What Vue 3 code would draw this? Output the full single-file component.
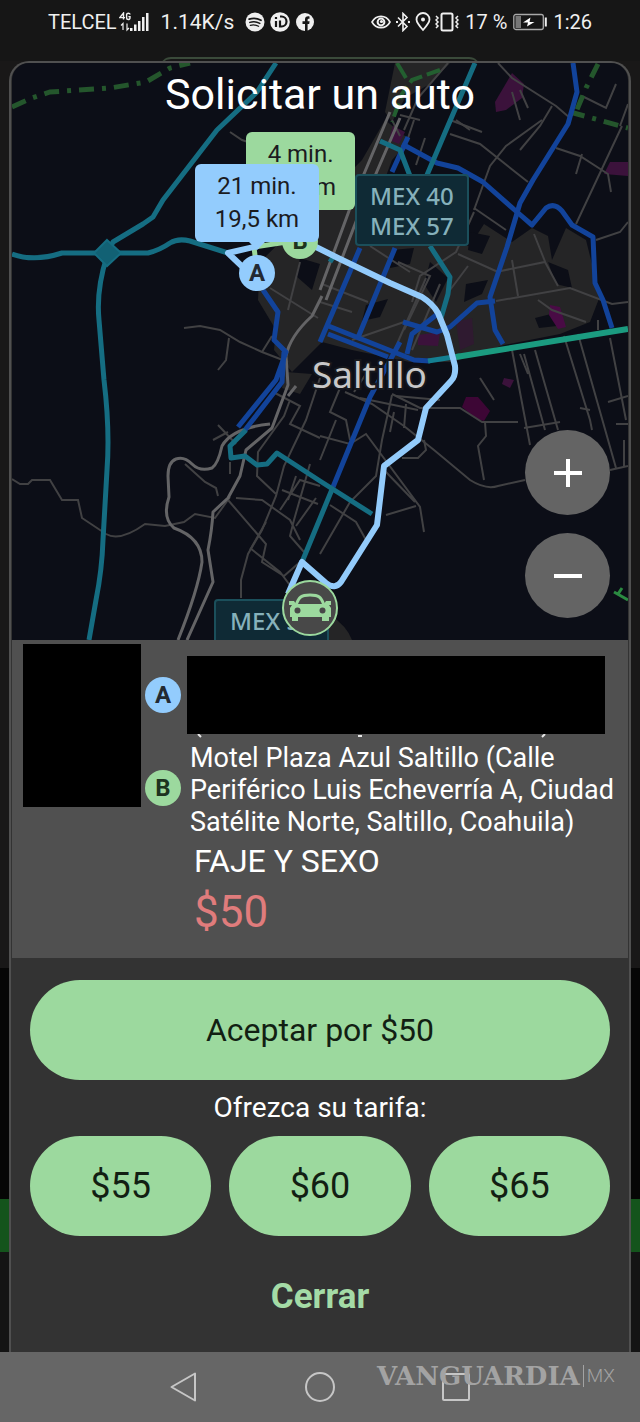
<template>
  <div class="screen">
    <!-- Status bar -->
    <header class="status-bar">
      <div class="status-group">
        <span class="carrier">TELCEL</span>
        <svg class="signal" viewBox="0 0 30 20" width="30" height="20" aria-hidden="true">
          <g fill="none" stroke="#f0f0f0" stroke-width="1.4">
            <path d="M4.5 7.5V1L0.8 5.6H6" />
            <path d="M11 2.6C11 0.8 7.6 0.8 7.6 2.6V6C7.6 8 11 8 11 6V4.6H9.4" />
            <path d="M4 18V11.500L2 13.500M8 11.500V18L10 16" stroke-width="1.2" />
          </g>
          <path fill="#f0f0f0" d="M11 16h2.500v3H11zM15 12.500h2.500V19H15zM19 9h2.500v10H19zM23 5h2.500v14H23zM27 1h2.500v18H27z" />
        </svg>
        <span class="speed">1.14K/s</span>
        <span class="app-icons">
          <svg viewBox="0 0 20 20" width="20" height="20" aria-hidden="true">
            <circle cx="10" cy="10" r="9.500" fill="#efefef" />
            <g fill="none" stroke="#161616" stroke-linecap="round">
              <path d="M4.200 7.200C8 6 12.500 6.400 16 8.200" stroke-width="1.800" />
              <path d="M4.800 10.400C8 9.400 11.800 9.800 14.800 11.400" stroke-width="1.500" />
              <path d="M5.300 13.400C8 12.600 11.200 13 13.600 14.300" stroke-width="1.200" />
            </g>
          </svg>
          <svg viewBox="0 0 20 20" width="20" height="20" aria-hidden="true">
            <circle cx="10" cy="10" r="9.800" fill="#efefef" />
            <path d="M6 9v6M6 5v2M10 4.500h1.500a5 5 0 0 1 0 10H10V8.500" fill="none" stroke="#161616" stroke-width="2.200" />
          </svg>
          <svg viewBox="0 0 20 20" width="20" height="20" aria-hidden="true">
            <circle cx="10" cy="10" r="9" fill="#efefef" />
            <path d="M10 19v-7H7.500V9.300H10V7.500C10 5 11.500 4 14.500 4.400v2.300C13 6.600 12.600 7 12.600 8v1.300h2L14.200 12h-1.600v7z" fill="#161616" />
          </svg>
        </span>
      </div>

      <div class="status-group">
        <span class="sys-icons">
          <svg viewBox="0 0 20 20" width="20" height="20" aria-hidden="true">
            <path d="M1 10C5 2.500 15 2.500 19 10C15 17.500 5 17.500 1 10z" fill="none" stroke="#f0f0f0" stroke-width="1.600" />
            <circle cx="10" cy="10" r="3.400" fill="none" stroke="#f0f0f0" stroke-width="2" />
            <circle cx="10.500" cy="9.500" r="1.600" fill="#f0f0f0" />
          </svg>
          <svg viewBox="0 0 16 20" width="16" height="20" aria-hidden="true">
            <path d="M3 5.500L12 14.500L8 18.500V1.500L12 5.500L3 14.500" fill="none" stroke="#f0f0f0" stroke-width="1.600" />
            <path d="M1 9h2v2H1zM13 9h2v2h-2z" fill="#f0f0f0" />
          </svg>
          <svg viewBox="0 0 16 20" width="16" height="20" aria-hidden="true">
            <path d="M8 18C4 13.500 1.500 10.500 1.500 7.500A6.500 6.500 0 0 1 14.500 7.500C14.500 10.500 12 13.500 8 18z" fill="none" stroke="#f0f0f0" stroke-width="1.800" />
            <circle cx="8" cy="7.600" r="2" fill="#f0f0f0" />
          </svg>
          <svg viewBox="0 0 24 20" width="24" height="20" aria-hidden="true">
            <rect x="6.500" y="1.500" width="11" height="17" rx="1.500" fill="none" stroke="#f0f0f0" stroke-width="2" />
            <path d="M1 4l2 2-2 2 2 2-2 2 2 2-2 2M23 4l-2 2 2 2-2 2 2 2-2 2 2 2" fill="none" stroke="#f0f0f0" stroke-width="1.500" />
          </svg>
        </span>
        <span>17 %</span>
        <svg viewBox="0 0 34 18" width="34" height="18" aria-hidden="true">
          <rect x="0.800" y="1.500" width="29.500" height="15" rx="2" fill="none" stroke="#a9a9a9" stroke-width="1.300" />
          <rect x="2.500" y="3" width="5.500" height="12" fill="#777" />
          <path d="M31.800 4.500h2v9h-2z" fill="#f0f0f0" />
          <path d="M17.500 4.500L10 9.500h5l-1 4L21.500 9h-5z" fill="#fff" />
        </svg>
        <span class="clock">1:26</span>
      </div>
    </header>

    <div class="stage">
      <div class="peek"></div>

      <main class="dialog">
        <!-- Map -->
        <section class="map">
          <svg class="map-canvas" viewBox="12 63 616 577" preserveAspectRatio="xMidYMid slice" aria-hidden="true">
            <rect x="12" y="63" width="616" height="577" fill="#0c0e17" />

            <!-- urban areas -->
            <g fill="#252526">
              <path d="M385 120L362 160L350 172L318 205L260 262L258 300L276 330L274 350L292 372L322 342L352 350L410 362L452 362L504 345L560 334L590 322L600 296L586 240L566 228L552 260L548 236L532 228L512 242L484 224L470 246L430 246L360 246L392 160L410 140z" />
              <path d="M395 63L450 63L430 84L405 98L392 122L385 112z" />
              <path d="M286 372L312 374L300 394L282 388z" />
              <path d="M325 640L329 614Q347 626 352 640z" />
            </g>
            <g fill="#0c0e17">
              <path d="M430 262l18 16-12 24-12-18zM392 250l22-2-4 16-20 4zM466 284l22-4-6 14-18 8zM300 258l20 6-8 26-16-14zM548 262l20 8 4 18-16-4zM366 305l22-6-8 18-18 4zM470 232l20 4-8 18-14-4zM535 318l16-4 6 12-18 2z" />
            </g>

            <!-- landmarks -->
            <g fill="#3b123b">
              <path d="M512 73L524 84L522 98L506 110L496 112L495 102z" />
              <path d="M550 305l10 2 6 20-8 2-9-14z" fill="#490b45" />
              <path d="M393 126l12 6-6 12-10-4z" />
              <path d="M418 335l22-3-2 14-20-1z" />
              <path d="M610 162h18v14l-24-2z" />
              <path d="M466 397l12 0 12 14-6 10-8-2-14-12z" fill="#3d0635" />
              <path d="M456 322l16-4 2 26-14 6z" fill="#2f1a30" />
              <path d="M504 378l10 2-4 8-8-4z" />
            </g>

            <!-- minor streets -->
            <g class="streets">
              <path d="M12 479L20 484L28 484L32 480L50 480L62 500L78 500L82 518L106 534Q120 542 145 524L165 526L184 522L195 514L215 518L230 497" />
              <path d="M184 328L200 326L220 330L240 342L262 352L288 362M229 338L226 360L218 370M262 352L272 336" />
              <path d="M185 464L205 482L216 488L218 496M213 440L228 432M218 425L236 444M230 462v12" />
              <path d="M320 378L306 420L284 466L276 496L262 530L248 554L241 580V598" />
              <path d="M228 500L266 544L262 562L284 576L300 562M250 548L280 572L292 588M266 522L250 550" />
              <path d="M275 393L300 406L290 424L320 438M290 400L284 416L258 452L257 476L276 494" />
              <path d="M236 498L262 500L290 520L300 540M310 464L294 520L290 536L304 552M280 510L300 480L320 486M282 490L318 504M296 476L288 500M316 498L296 526" />
              <path d="M392 394L420 408H460L482 422H518M485 422L486 436L478 446L484 480" />
              <path d="M345 392L372 404L404 426L434 450L470 480Q486 490 498 486L525 480M610 470L628 466" />
              <path d="M340 388L330 412L346 420L350 440M320 436L350 444L366 434L420 507L424 532M386 515L416 506M384 470L415 502" />
              <path d="M392 395L382 440L376 476L350 502L320 554M330 505L356 522L366 540M320 460L336 420" />
              <path d="M360 398L418 410M394 412L390 432M424 440L426 450L418 458H402" />
              <path d="M512 350L530 445M524 354L545 430M535 350L558 430M564 336L590 420L592 430M578 334L616 468M610 338L626 420M520 354L528 374" />
              <path d="M524 428L560 422M580 408L590 410M608 402L628 396M616 424H628M624 440V466" />
              <path d="M425 138L416 165M414 120L404 150" />
              <path d="M450 134L480 144L528 182M542 120L506 146L490 166L474 210M450 120L482 132" />
              <path d="M556 148L580 156L608 174L611 192M622 126L576 224M582 154L576 174" />
              <path d="M498 63L512 78L556 106L570 118M520 90L528 108M552 106L540 126L520 150M512 92L520 120" />
              <path d="M582 96L606 108L616 84M628 104L620 126M596 240L620 232L628 222" />
              <path d="M474 208L506 230M458 254L498 272M496 272L545 262L558 286M512 260L518 296M534 234L546 264" />
              <path d="M496 301L570 288L612 304L628 302M538 300L552 310L586 322M598 320V330" />
              <path d="M474 212L456 252L420 276L412 302M450 290L468 266M398 262L430 276L404 330M370 246L410 272" />
              <path d="M322 284L368 302M320 302L352 312M352 340L404 322M426 278L390 360M440 284L412 350" />
              <path d="M400 136L392 120M448 63L418 98L404 130M400 115L420 120M456 120L470 130" />
              <path d="M296 158L242 140L230 132M270 288L318 318M300 262L288 310" />
              <path d="M370 368L354 392M396 396L440 400M406 404L404 428M480 378L494 400" />
            </g>

            <!-- rail and secondary roads -->
            <g class="roads">
              <path d="M390 112L353 200L320 290M400 118L362 206L326 300" stroke-width="2" />
              <path d="M322 296L312 316Q290 336 286 356L288 385L272 428L246 450L240 476L228 498L213 512Q212 530 208 550L213 582L187 640" />
              <path d="M270 424Q232 428 222 446Q218 464 212 468Q200 472 192 464Q184 456 176 459Q168 462 168 476L169 497Q162 518 174 528Q202 538 202 562Q198 590 178 640" />
              <path d="M296 386L288 396" />
            </g>

            <!-- district boundary -->
            <g class="boundary">
              <path d="M12 107L32 98L50 92L110 88L146 82L170 68L190 63" />
              <path d="M570 112L628 128M598 64L586 88L576 112" />
            </g>
            <g fill="none" stroke="#235f30" stroke-width="4">
              <path d="M440 70L412 80L402 94L392 122" stroke-dasharray="14 5" />
              <path d="M397 63L406 78" />
              <path d="M614 592L628 600M622 588L618 594" stroke="#2b8a41" stroke-width="3" />
            </g>

            <!-- avenues -->
            <g class="avenues">
              <path d="M573 63L577 92L568 124L533 180L520 203L507 247L490 297L495 330L503 344" />
              <path d="M402 144L437 163L458 168L483 182L517 212L532 225L546 208Q554 202 562 211L572 225L593 237L595 283L603 300L612 328" />
              <path d="M495 301L477 303L450 327L437 332L403 322M440 312L412 334L407 354" />
              <path d="M408 137L392 172M360 248L320 342M395 248L357 340M326 325L414 360L430 361M328 334L388 357M400 342L370 397L333 487" />
              <path d="M263 290L278 312L274 340L286 352L276 380L238 427M284 352L282 382L245 430" />
            </g>

            <!-- highways -->
            <g class="highways">
              <path d="M276 63L257 92L217 130L163 200L153 217L143 224L113 242L107 253" />
              <path d="M12 254Q34 262 62 253H148Q160 250 170 243Q178 238 190 241L228 253" stroke-width="6" />
              <path d="M107 256Q96 290 99 320L104 380Q110 430 107 470L103 540Q102 570 96 600L89 640" />
              <path d="M475 63L447 128L427 175M380 141L400 150L410 176M430 246L450 277L448 294L441 318" />
              <path d="M246 430L230 446L231 458L245 456L257 465L267 464L277 453L320 481L372 514M333 487L302 562" />
              <path d="M335 254L330 262" />
            </g>
            <path d="M107 240L121 253L107 266L94 253z" fill="#126174" stroke="#156d82" stroke-width="2" />
            <path d="M428 361L460 356" fill="none" stroke="#147f91" stroke-width="5" />
            <path d="M456 357L628 329" fill="none" stroke="#1b9b80" stroke-width="6" />

            <!-- road signs and city name -->
            <g class="sign">
              <rect x="356" y="175" width="112" height="70" rx="3" />
              <text x="370" y="205">MEX 40</text>
              <text x="370" y="235">MEX 57</text>
              <rect x="215" y="600" width="113" height="60" rx="3" />
              <text x="230" y="630">MEX 57</text>
            </g>
            <text class="city" x="312" y="388">Saltillo</text>

            <!-- route -->
            <path d="M257 272L254 247L300 240" fill="none" stroke="#9cd99e" stroke-width="5" />
            <path class="route" d="M250 274L228 253L258 246M300 243L316 247L338 258L390 283L422 297Q433 304 438 313L447 335L455 366Q456 376 451 381L426 408L418 440L384 466L377 525L341 582Q335 590 326 583L302 562L288 594" />
          </svg>

          <h1 class="title">Solicitar un auto</h1>

          <span class="pin badge-b">B</span>
          <div class="bubble bubble-b">4 min.<br>1,8 km</div>
          <div class="bubble bubble-a">21 min.<br>19,5 km</div>
          <span class="pin badge-a">A</span>

          <div class="car-pin">
            <svg viewBox="0 0 44 32" width="44" height="32" aria-hidden="true">
              <path d="M8 13C11 5 13 3 22 3S33 5 36 13" fill="none" stroke="#9cd99e" stroke-width="3" />
              <path d="M1 9h5l2 3h28l2-3h5v4h-2l2 3v9h-2v4h-7v-4H10v4H4v-4H2v-9l2-3H1z" fill="#9cd99e" />
              <circle cx="9.500" cy="18.500" r="3" fill="#484848" />
              <circle cx="34.500" cy="18.500" r="3" fill="#484848" />
            </svg>
          </div>

          <div class="zoom">
            <button type="button" aria-label="Acercar" @click="zoomIn">
              <svg viewBox="0 0 30 30" width="30" height="30"><path d="M15 1v28M1 15h28" stroke="#fff" stroke-width="4" /></svg>
            </button>
            <button type="button" aria-label="Alejar" @click="zoomOut">
              <svg viewBox="0 0 30 30" width="30" height="30"><path d="M1 15h28" stroke="#fff" stroke-width="4" /></svg>
            </button>
          </div>
        </section>

        <!-- Trip details -->
        <section class="trip">
          <div class="photo"></div>
          <div class="trip-info">
            <div class="stop">
              <span class="badge badge-a">A</span>
              <div class="hidden-address">
                <svg viewBox="0 0 417 4" width="417" height="4" aria-hidden="true">
                  <path d="M11 0l3 3M171 2h4M355 3l3-3" stroke="#e8e8e8" stroke-width="2" />
                </svg>
              </div>
            </div>
            <div class="stop">
              <span class="badge badge-b">B</span>
              <p class="address">{{ destination }}</p>
            </div>
            <p class="comment">FAJE Y SEXO</p>
            <p class="price">${{ price }}</p>
          </div>
        </section>

        <!-- Actions -->
        <section class="actions">
          <button type="button" class="pill accept" @click="offer(price)">Aceptar por ${{ price }}</button>
          <p class="offer-label">Ofrezca su tarifa:</p>
          <div class="fares">
            <button
              v-for="fare in fares"
              :key="fare"
              type="button"
              class="pill"
              @click="offer(fare)"
            >
              ${{ fare }}
            </button>
          </div>
          <button type="button" class="close">Cerrar</button>
        </section>
      </main>
    </div>

    <!-- Android navigation -->
    <nav class="nav-bar">
      <button type="button" aria-label="Atrás">
        <svg viewBox="0 0 32 32" width="32" height="32"><path d="M27 2.500V29.500L3.500 16z" /></svg>
      </button>
      <button type="button" aria-label="Inicio">
        <svg viewBox="0 0 32 32" width="32" height="32"><circle cx="16" cy="16" r="14" /></svg>
      </button>
      <button type="button" aria-label="Recientes">
        <svg viewBox="0 0 32 32" width="32" height="32"><rect x="3" y="3" width="26" height="26" rx="1" /></svg>
      </button>
      <div class="watermark"><b>VANGUARDIA</b><span>MX</span></div>
    </nav>
  </div>
</template>

<script setup>
import { ref } from 'vue'

const destination = 'Motel Plaza Azul Saltillo (Calle Periférico Luis Echeverría A, Ciudad Satélite Norte, Saltillo, Coahuila)'
const price = ref(50)
const fares = [55, 60, 65]

const zoomLevel = ref(12)
const offered = ref(null)

function zoomIn() {
  zoomLevel.value++
}

function zoomOut() {
  zoomLevel.value--
}

function offer(amount) {
  offered.value = amount
}
</script>

<style>
body {
  background: #161616;
}
</style>

<style scoped>
.screen {
  min-height: 100vh;
  display: flex;
  flex-direction: column;
  background: #161616;
  color: #fff;
  font-family: Roboto, "Liberation Sans", sans-serif;
}

button {
  border: none;
  padding: 0;
  font-family: inherit;
  cursor: pointer;
}

h1,
p {
  margin: 0;
  font-weight: 400;
}

/* Status bar */
.status-bar {
  height: 61px;
  box-sizing: border-box;
  padding: 0 48px 17px;
  display: flex;
  justify-content: space-between;
  align-items: center;
  font-size: 20px;
  color: #f0f0f0;
}

.status-group {
  display: flex;
  align-items: center;
  gap: 6px;
}

.signal {
  margin: 0 6px 0 -4px;
}

.speed {
  font-size: 21px;
}

.app-icons {
  display: flex;
  gap: 5px;
  margin-left: 5px;
}

.sys-icons {
  display: flex;
  gap: 4px;
}

/* Dialog over the order feed */
.stage {
  flex: 1;
  position: relative;
  display: flex;
  padding: 0 9px;
  background: linear-gradient(
    #191818 907px,
    #060606 907px 1138px,
    #14541c 1138px 1191px,
    #141414 1191px
  );
}

.peek {
  position: absolute;
  top: -4px;
  left: 25%;
  right: 25%;
  height: 20px;
  border-top: 2px solid #3a4a3a;
  border-radius: 18px;
}

.dialog {
  flex: 1;
  min-width: 0;
  display: flex;
  flex-direction: column;
  position: relative;
  padding: 0 1px;
  border: 2px solid #505050;
  border-bottom: none;
  border-radius: 20px 20px 0 0;
  background: #333;
}

/* Map */
.map {
  position: relative;
  aspect-ratio: 616 / 577;
  overflow: hidden;
  border-radius: 17px 17px 0 0;
}

.map-canvas {
  position: absolute;
  inset: 0;
  width: 100%;
  height: 100%;
}

.streets path {
  fill: none;
  stroke: #414143;
  stroke-width: 2;
}

.roads path {
  fill: none;
  stroke: #646466;
  stroke-width: 3;
  stroke-linejoin: round;
}

.boundary path {
  fill: none;
  stroke: #24562c;
  stroke-width: 5;
  stroke-dasharray: 15 8 4 8;
}

.avenues path {
  fill: none;
  stroke: #12439a;
  stroke-width: 5;
  stroke-linejoin: round;
}

.highways path {
  fill: none;
  stroke: #156d82;
  stroke-width: 5;
  stroke-linejoin: round;
}

.sign rect {
  fill: #0f2a35;
  stroke: #1b4f5b;
  stroke-width: 2;
}

.sign text {
  fill: #86b1bb;
  font-family: "Noto Sans", sans-serif;
  font-size: 24px;
  font-weight: 500;
}

.city {
  fill: #c8c8c8;
  stroke: #17181c;
  stroke-width: 4;
  paint-order: stroke;
  font-family: "Noto Sans", sans-serif;
  font-size: 37px;
}

.route {
  fill: none;
  stroke: #93cbfb;
  stroke-width: 6;
  stroke-linejoin: round;
}

.title {
  position: relative;
  text-align: center;
  font-size: 43px;
  line-height: 62px;
}

.badge,
.pin {
  width: 36px;
  height: 36px;
  flex-shrink: 0;
  border-radius: 50%;
  color: #222a33;
  font-size: 24px;
  font-weight: 700;
  line-height: 36px;
  text-align: center;
}

.badge-a {
  background: #93ccfd;
}

.badge-b {
  background: #9cd99e;
  color: #1d331f;
}

.pin {
  position: absolute;
  transform: translate(-50%, -50%);
}

.pin.badge-a {
  left: 39.8%;
  top: 36.4%;
}

.pin.badge-b {
  left: 46.8%;
  top: 30.8%;
}

.bubble {
  position: absolute;
  box-sizing: border-box;
  padding: 6px 0;
  border-radius: 6px;
  color: #1b1b1f;
  font-size: 24px;
  line-height: 33px;
  text-align: center;
}

.bubble-b {
  left: 38%;
  top: 12%;
  width: 109px;
  background: #9cd99e;
}

.bubble-a {
  left: 29.7%;
  top: 17.5%;
  width: 124px;
  background: #93ccfd;
}

.bubble-a::after {
  content: "";
  position: absolute;
  top: 100%;
  left: 50%;
  margin-left: -8px;
  border: 8px solid transparent;
  border-top-color: #93ccfd;
}

.car-pin {
  position: absolute;
  left: 48%;
  bottom: 4px;
  width: 56px;
  height: 56px;
  box-sizing: border-box;
  margin-left: -26px;
  display: flex;
  align-items: center;
  justify-content: center;
  border: 2px solid #9cd99e;
  border-radius: 50%;
  background: #484848;
}

.zoom {
  position: absolute;
  right: 18px;
  bottom: 22px;
  display: flex;
  flex-direction: column;
  gap: 18px;
}

.zoom button {
  width: 85px;
  height: 85px;
  display: flex;
  align-items: center;
  justify-content: center;
  border-radius: 50%;
  background: #646464;
}

/* Trip details */
.trip {
  display: flex;
  align-items: flex-start;
  gap: 4px;
  padding: 4px 11px 15px;
  background: #505050;
}

.photo {
  width: 118px;
  height: 163px;
  flex-shrink: 0;
  background: #000;
}

.trip-info {
  flex: 1;
  min-width: 0;
  padding-top: 12px;
}

.stop {
  display: flex;
  align-items: center;
  gap: 6px;
}

.stop + .stop {
  margin-top: 4px;
}

.hidden-address {
  flex: 1;
  position: relative;
  height: 78px;
  margin-right: 12px;
  background: #000;
}

.hidden-address svg {
  position: absolute;
  top: 100%;
  left: 0;
}

.address {
  margin: 4px 0 0 3px;
  font-size: 27px;
  line-height: 32px;
}

.comment {
  margin: 3px 0 0 49px;
  font-size: 32px;
  line-height: 40px;
}

.price {
  margin-left: 49px;
  color: #e07c7c;
  font-size: 44px;
  line-height: 62px;
}

/* Actions */
.actions {
  flex: 1;
  display: flex;
  flex-direction: column;
  padding: 22px 18px 16px;
}

.pill {
  height: 100px;
  border-radius: 50px;
  background: #9cd99e;
  color: #121f13;
  font-size: 36px;
}

.accept {
  font-size: 32px;
}

.offer-label {
  font-size: 28px;
  line-height: 56px;
  text-align: center;
}

.fares {
  display: grid;
  grid-template-columns: repeat(3, 1fr);
  gap: 18px;
}

.close {
  align-self: center;
  height: 80px;
  margin-top: 20px;
  background: none;
  color: #a4dba6;
  font-size: 35px;
  font-weight: 700;
}

/* Android navigation */
.nav-bar {
  position: relative;
  height: 70px;
  display: flex;
  justify-content: center;
  align-items: center;
  gap: 80px;
  background: #666;
}

.nav-bar button {
  width: 56px;
  height: 56px;
  background: none;
}

.nav-bar svg {
  display: block;
  margin: 0 auto;
  fill: none;
  stroke: #c6c6c6;
  stroke-width: 2;
  stroke-linejoin: round;
}

.watermark {
  position: absolute;
  right: 25px;
  top: 9px;
  display: flex;
  align-items: center;
  gap: 3px;
  color: #a3a3a3;
  line-height: 30px;
  pointer-events: none;
}

.watermark b {
  font-family: "DejaVu Serif", serif;
  font-size: 26px;
}

.watermark span {
  padding-left: 3px;
  border-left: 1px solid #a3a3a3;
  font-size: 19px;
  font-weight: 300;
  line-height: 22px;
}
</style>
